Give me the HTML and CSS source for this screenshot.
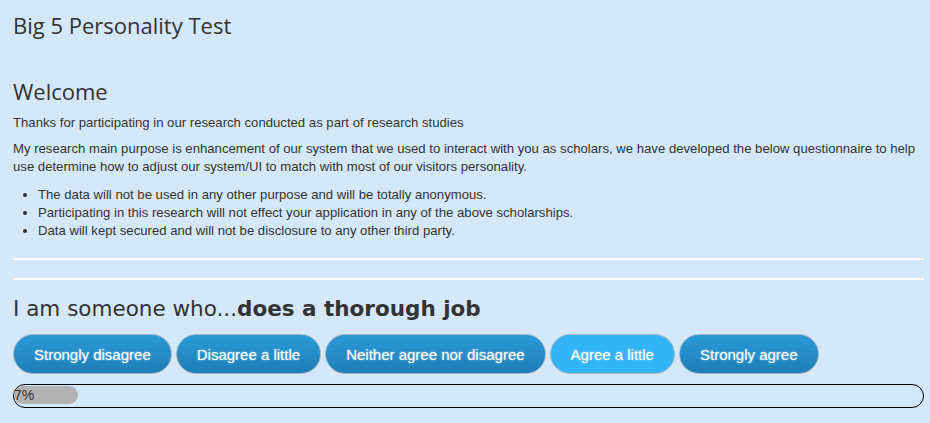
FILE: index.html
```html
<!DOCTYPE html>
<html lang="en">
<head>
  <meta charset="UTF-8" />
  <meta name="viewport" content="width=device-width, initial-scale=1.0" />
  <title>Big 5 Personality Test</title>
  <link rel="stylesheet" href="styles.css">
</head>
<body>
  <div class="container">
    <h1 class="title">Big 5 Personality Test</h1>

    <div class="intro">
      <h2>Welcome</h2>
      <p>Thanks for participating in our research conducted as part of research studies</p>
      <p>My research main purpose is enhancement of our system that we used to interact with you as scholars, we have developed the below questionnaire to help use determine how to adjust our system/UI to match with most of our visitors personality.</p>
      <ul>
        <li>The data will not be used in any other purpose and will be totally anonymous.</li>
        <li>Participating in this research will not effect your application in any of the above scholarships.</li>
        <li>Data will kept secured and will not be disclosure to any other third party.</li>
      </ul>
    </div>

    <hr class="sep" />
    <hr class="sep" />

    <h3 class="question">I am someone who...<b>does a thorough job</b></h3>
    <div class="answers">
      <button class="btn">Strongly disagree</button>
      <button class="btn">Disagree a little</button>
      <button class="btn">Neither agree nor disagree</button>
      <button class="btn active">Agree a little</button>
      <button class="btn">Strongly agree</button>
    </div>

    <div class="progress">
      <div class="progress-bar" style="width: 7%">7%</div>
    </div>
  </div>
</body>
</html>
```

FILE: styles.css
```css
body {
  margin: 0;
  background: #d4e8f9;
  color: #333;
  font-family: "Liberation Sans", Arial, sans-serif;
}
.container {
  padding: 0 6px 0 13px;
}
.title {
  font-family: "Open Sans", sans-serif;
  font-weight: 500;
  font-size: 22px;
  line-height: 30px;
  margin: 0;
  padding-top: 10px;
}
.intro h2 {
  font-family: "Open Sans", sans-serif;
  font-weight: 500;
  font-size: 22px;
  line-height: 30px;
  margin: 36px 0 8px;
}
.intro p {
  font-size: 13.15px;
  line-height: 18px;
  margin: 0 0 8px;
}
.intro ul {
  font-size: 13.15px;
  line-height: 18px;
  margin: 10px 0 0;
  padding-left: 25px;
}
.sep {
  border: none;
  border-top: 2px solid #fff;
  margin: 18px 0 0;
}
.question {
  font-family: "DejaVu Sans", Verdana, sans-serif;
  font-weight: normal;
  font-size: 21.5px;
  line-height: 30px;
  margin: 14px 0 10px;
}
.answers {
  display: flex;
  gap: 4px;
}
.btn {
  font-family: "Liberation Sans", Arial, sans-serif;
  font-size: 15px;
  color: #fff;
  text-shadow: 0 0 2px rgba(255,255,255,0.6);
  background: linear-gradient(#2a9bd8, #1e7db5);
  border: 1px solid #a7b6c2;
  border-radius: 20px;
  height: 40px;
  padding: 0 20px;
  cursor: pointer;
}
.btn.active {
  background: #32b4f6;
}
.progress {
  margin-top: 10px;
  height: 20px;
  border: 1px solid #000;
  border-radius: 12px;
  padding: 1px 0;
}
.progress-bar {
  height: 18px;
  background: #b3b3b3;
  border-radius: 9px;
  font-size: 14px;
  line-height: 18px;
  color: #333;
}
```
